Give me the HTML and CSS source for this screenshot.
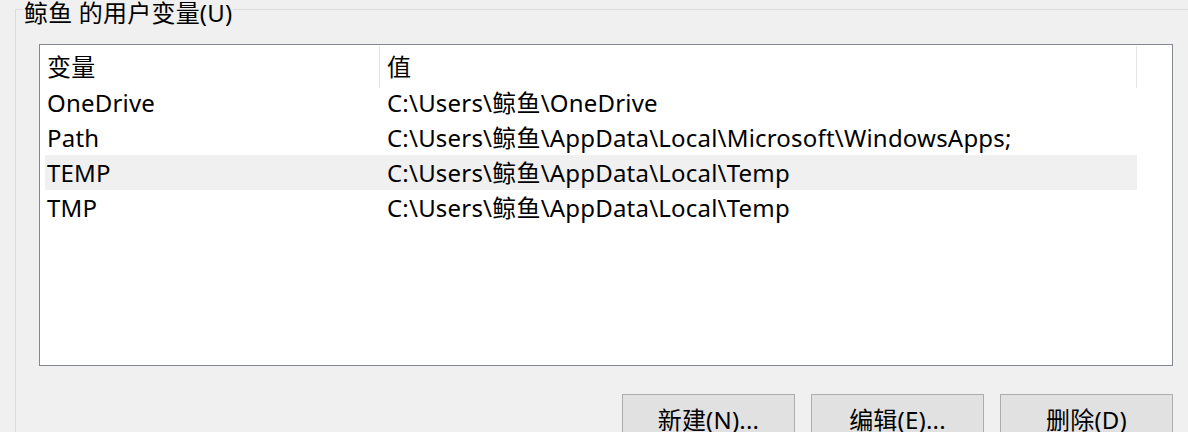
FILE: index.html
```html
<!DOCTYPE html>
<html lang="zh-CN">
<head>
<meta charset="utf-8">
<title>用户变量</title>
<link rel="stylesheet" href="styles.css">
</head>
<body>
<fieldset class="group">
  <legend class="group-title">鲸鱼 的用户变量(U)</legend>
  <div class="listbox">
    <div class="list-head">
      <div class="head-cell">变量</div>
      <div class="head-cell">值</div>
    </div>
    <div class="row"><div class="cell name">OneDrive</div><div class="cell value">C:\Users\鲸鱼\OneDrive</div></div>
    <div class="row"><div class="cell name">Path</div><div class="cell value">C:\Users\鲸鱼\AppData\Local\Microsoft\WindowsApps;</div></div>
    <div class="row selected"><div class="cell name">TEMP</div><div class="cell value">C:\Users\鲸鱼\AppData\Local\Temp</div></div>
    <div class="row"><div class="cell name">TMP</div><div class="cell value">C:\Users\鲸鱼\AppData\Local\Temp</div></div>
  </div>
  <div class="buttons">
    <button class="btn" type="button">新建(N)...</button>
    <button class="btn" type="button">编辑(E)...</button>
    <button class="btn" type="button">删除(D)</button>
  </div>
</fieldset>
</body>
</html>
```
FILE: styles.css
```css
html, body {
  margin: 0;
  padding: 0;
  background: #f0f0f0;
  overflow: hidden;
}
body {
  width: 1188px;
  height: 432px;
  font-family: "Noto Sans", "Noto Sans CJK SC", sans-serif;
  font-size: 24px;
  letter-spacing: 0.2px;
  color: #000;
}
.group {
  margin: 0 -40px 0 15px;
  padding: 0 40px 0 23px;
  border: 1px solid #dcdcdc;
  border-right: none;
  border-bottom: none;
  min-width: 0;
}
.group-title {
  margin-left: -16px;
  padding: 0 1px;
  height: 19px;
  line-height: 25px;
  white-space: nowrap;
}
.listbox {
  margin-top: 25px;
  width: 1132px;
  height: 320px;
  border: 1px solid #828790;
  background: #fff;
}
.list-head {
  display: grid;
  grid-template-columns: 340px 757px;
  height: 40px;
}
.head-cell {
  margin-top: 1px;
  padding-left: 7px;
  border-right: 1px solid #e5e5e5;
  line-height: 42px;
  white-space: nowrap;
}
.row {
  display: grid;
  grid-template-columns: 335px 1fr;
  margin-left: 5px;
  width: 1092px;
  height: 35px;
  line-height: 35px;
  white-space: nowrap;
}
.row.selected {
  background: #f0f0f0;
}
.cell.name {
  padding-left: 2px;
}
.cell.value {
  padding-left: 7px;
}
.buttons {
  display: flex;
  justify-content: flex-end;
  gap: 16px;
  width: 1134px;
  margin-top: 28px;
}
.btn {
  width: 173px;
  height: 52px;
  padding: 0;
  border: 1px solid #adadad;
  background: #e1e1e1;
  font-family: inherit;
  font-size: 24px;
  letter-spacing: 0.2px;
  color: #000;
  line-height: 50px;
}
```
